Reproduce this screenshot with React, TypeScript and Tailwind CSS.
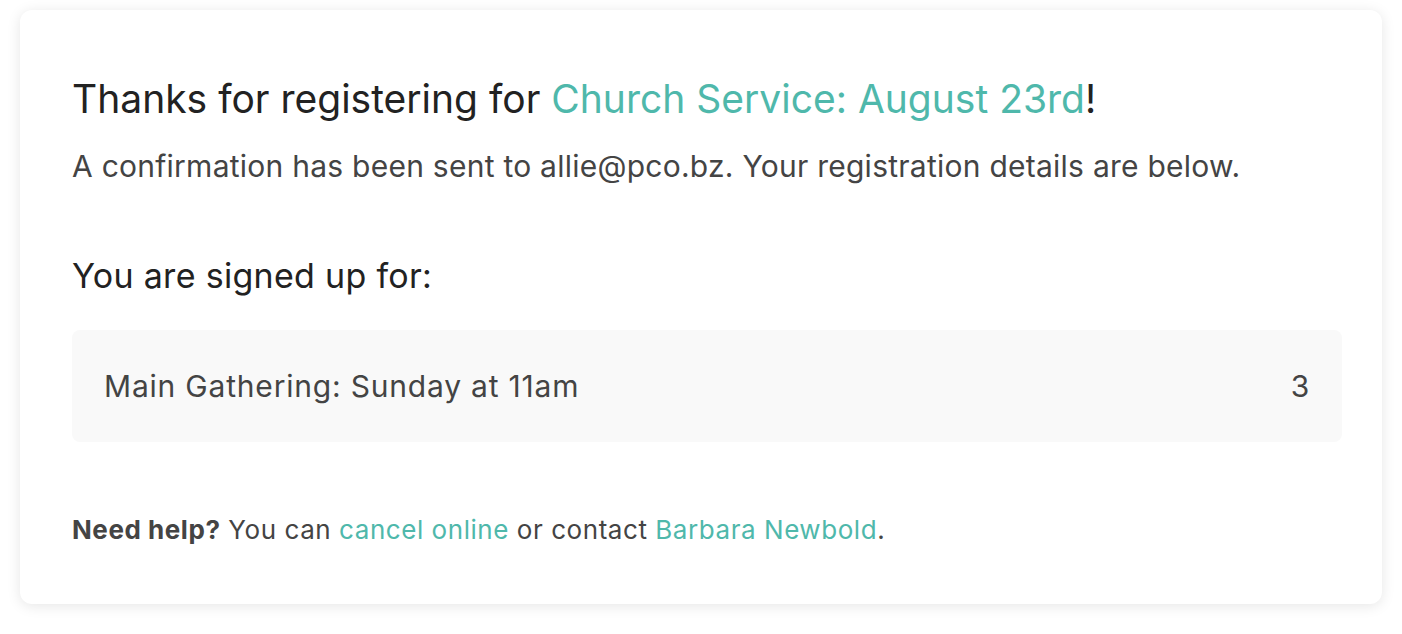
import React from "react";

export default function App() {
  return (
    <div className="min-h-[634px] bg-white px-[20px] pt-[10px]" style={{ fontFamily: "Inter, 'Noto Sans', sans-serif" }}>
      <div className="rounded-[12px] bg-white shadow-[0_2px_14px_rgba(0,0,0,0.10)] pl-[52px] pr-[40px] pt-[66px] pb-[58px]">
        <h1 className="text-[39px] leading-[46px] text-[#222222] font-normal">
          Thanks for registering for <span className="text-[#4fb8ab]">Church Service: August 23rd</span>!
        </h1>
        <p className="mt-[26px] text-[30px] leading-[36px] tracking-[0.25px] text-[#444444]">
          A confirmation has been sent to allie@pco.bz. Your registration details are below.
        </p>
        <h2 className="mt-[72px] text-[34px] leading-[40px] tracking-[0.3px] text-[#222222] font-normal">You are signed up for:</h2>
        <div className="mt-[34px] flex items-center justify-between rounded-[8px] bg-[#f9f9f9] h-[112px] pl-[32px] pr-[32px] text-[30px] tracking-[0.8px] text-[#444444]">
          <span>Main Gathering: Sunday at 11am</span>
          <span>3</span>
        </div>
        <p className="mt-[72px] text-[26px] leading-[32px] tracking-[0.55px] text-[#444444]">
          <span className="font-bold">Need help?</span> You can <span className="text-[#4fb8ab]">cancel online</span> or contact{" "}
          <span className="text-[#4fb8ab]">Barbara Newbold</span>.
        </p>
      </div>
    </div>
  );
}
